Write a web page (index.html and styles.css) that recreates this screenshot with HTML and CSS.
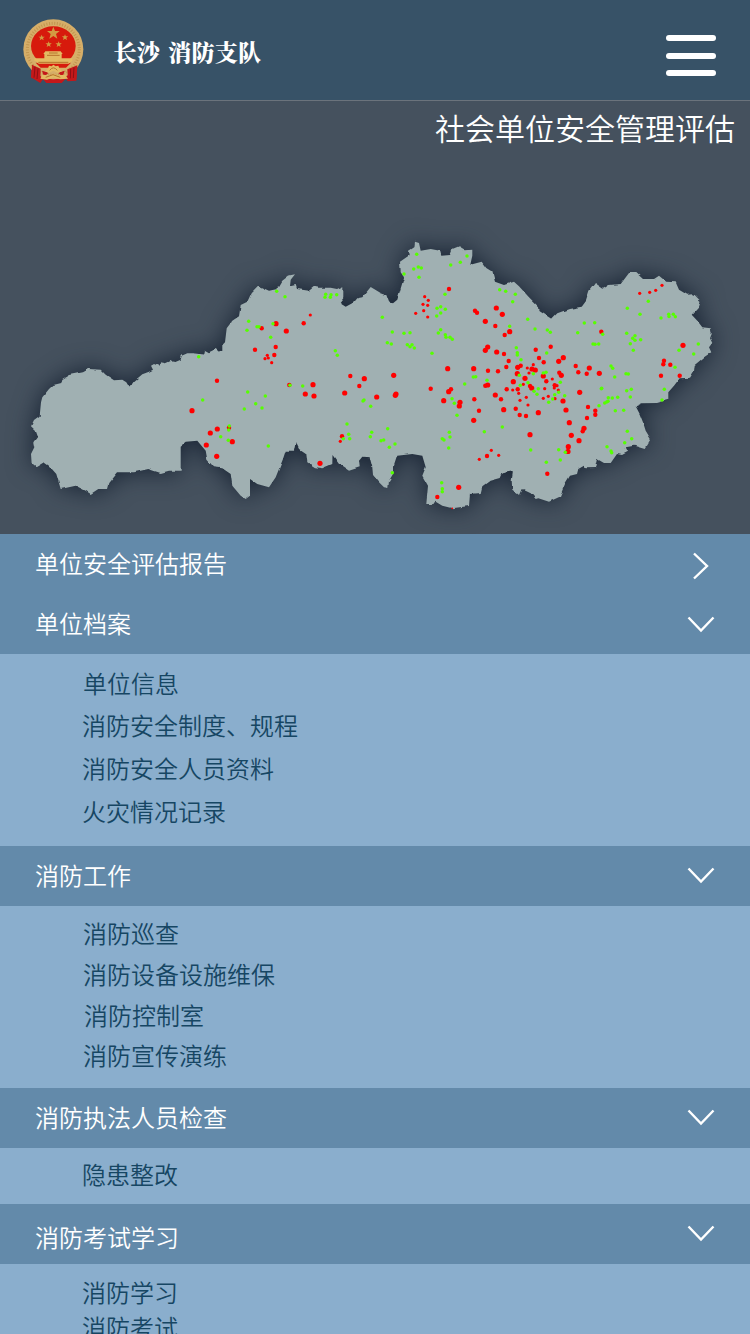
FILE: index.html
```html
<!DOCTYPE html>
<html lang="zh-CN">
<head>
<meta charset="utf-8">
<title>长沙 消防支队</title>
<link rel="stylesheet" href="styles.css">
</head>
<body>
<header class="topbar">
  <svg class="emblem" viewBox="0 0 186 204">
    <path class="drape" d="M27 128L24 178L52 195L60 184L70 195L116 195L128 182L134 190L160 188L163 146L150 130Z"/>
    <circle class="gold" cx="91" cy="94" r="90"/>
    <circle class="wheat" cx="91" cy="94" r="78"/>
    <ellipse class="red" cx="91" cy="84" rx="67" ry="59"/>
    <path class="red" d="M38 134H144L129 149H53Z"/>
    <g class="star">
      <path d="M91 26l5 13h14l-11 9 4 14-12-8-12 8 4-14-11-9h14z"/>
      <path d="M56 50l2.500 6h7l-5.500 4 2 7-6-4-6 4 2-7-5.500-4h7z"/>
      <path d="M126 49l2.500 6h7l-5.500 4 2 7-6-4-6 4 2-7-5.500-4h7zM77 70l2.500 6h7l-5.500 4 2 7-6-4-6 4 2-7-5.500-4h7zM107 70l2.500 6h7l-5.500 4 2 7-6-4-6 4 2-7-5.500-4h7z"/>
    </g>
    <g class="gate">
      <path d="M67 100H113L119 108H116V121H148V129H34V121H64V108H61Z"/>
      <path d="M37 129H148L137 137H47Z"/>
    </g>
    <path class="drape" d="M27 140l26 12-1 40-12-10-15-2zM163 142l-30 12 2 34 12-8 13 2zM57 158l20 6-14 12zM125 158l-20 6 14 12z"/>
    <path class="fold" d="M36 147l-3 32M45 151l-3 32M153 148l-2 32M143 153l-1 28"/>
    <path class="gate" d="M67 160l8-9 3-8 8 2 5-5 7 5 8-2 3 8 8 9-12 5-14-7-14 7zM58 170l22 2 12-5 12 5 23-2 8 12-24 2-19-6-20 7-20-3z"/>
    <path class="line" d="M80 157q11-15 23 0M68 178l22-8 22 8M72 112h38M78 105h26M46 133h90"/>
  </svg>
  <h1 class="brand">长沙 消防支队</h1>
  <div class="burger"><span></span><span></span><span></span></div>
</header>
<section class="overview">
  <h2 class="headline">社会单位安全管理评估</h2>
  <svg class="map" viewBox="0 101 750 433">
    <defs>
      <filter id="coast" x="-5%" y="-10%" width="110%" height="120%" color-interpolation-filters="sRGB">
        <feTurbulence type="fractalNoise" baseFrequency="0.14" numOctaves="1" seed="4" result="n"/>
        <feDisplacementMap in="SourceGraphic" in2="n" scale="3.500" xChannelSelector="R" yChannelSelector="G"/>
        <feOffset dx="-1" dy="-1"/>
      </filter>
      <marker id="rl" viewBox="-3 -3 6 6" markerWidth="6" markerHeight="6" markerUnits="userSpaceOnUse"><circle r="2.600" class="hot"/></marker>
      <marker id="rm" viewBox="-3 -3 6 6" markerWidth="6" markerHeight="6" markerUnits="userSpaceOnUse"><circle r="2.200" class="hot"/></marker>
      <marker id="rs" viewBox="-3 -3 6 6" markerWidth="6" markerHeight="6" markerUnits="userSpaceOnUse"><circle r="1.600" class="hot"/></marker>
      <marker id="gm" viewBox="-3 -3 6 6" markerWidth="6" markerHeight="6" markerUnits="userSpaceOnUse"><circle r="1.750" class="safe"/></marker>
    </defs>
    <g class="glow"><path class="land" filter="url(#coast)" d="M32 455L35.300 448.300 34.300 443.300 38.700 437.300 36.700 431.700 32 427.300 35 421 40.700 416.700 42 403.300 43.300 398.300 50 390 54.300 386 62.300 384 63.300 380 70 376 84 373.300 90 370 101.700 370.700 106.700 375.700 115 381.300 123.300 380.700 127.300 383.300 130.500 388.500 135 382.300 143.300 375.300 150 372.700 154 370.700 152 366.700 155 365 159.300 366.700 161.700 363.300 166.700 364.300 171.700 362 174 364 181.700 360.700 182.700 356.700 188.300 354.300 195 354.300 205 355.500 206 351 210 353.300 216.700 350 220 352.700 223.300 351.700 223.300 346 226 343.300 227.700 329.300 233.300 321.700 240 317.300 241.700 306 248.300 302.700 252.700 293.300 259 286.700 270 291.700 278.300 290 283.300 281.700 290 276.500 296 275.300 291.700 280.700 291 287.300 296.700 286 298 290 310 291.700 315 287.700 320 288.700 331.700 288.700 338 290 344.300 287.300 344.300 299.300 340.700 304 346.700 307.700 355 303.300 358.300 299.300 363.300 298.300 371.700 288 381.700 294 387.300 296 390 303.300 394 304.300 398.300 300.700 401 291.700 405 278.300 401.700 273.300 401 262.700 406.700 258.700 410.700 256 410 251.700 415.300 248.300 416 242.700 420 244 421.700 251.700 431.700 250 441 251.700 442.300 256.700 451 256 453.300 250 460 247.300 466.700 251.300 473.300 250.700 473.300 256.700 471.300 265.700 482.700 262.700 487.300 269 493.300 272.700 496 282.700 505 286 515 282.700 520 287.300 530 298.300 540 308.300 540.700 312.300 552.700 320 558.300 314.300 570 310 582.700 307.700 587 302 590.300 291.700 596 284 604.300 289.700 610 286 621.700 285 630 274 637.300 274 644 280 655 280 660 276.700 667.300 282.700 676.700 283.300 680 290.700 688.300 295.700 695 295.300 701.700 302.300 700 307.700 692.700 315.700 698.300 321.700 703.300 328.300 711.700 329.300 712.700 335 711 339.300 713.300 344 710 348.300 712.300 353.300 705 358.300 695.700 366 695 372.300 691 378.700 680.700 379.300 675 386.700 669.300 393.300 669.300 400.700 658 404 643.300 404.300 636.700 407.300 640.700 415 644 423.300 646.700 431.700 651.700 440 645.700 450 635 446.700 626.700 448.300 629 452.700 623 456 618 455 611.700 464 605 464 598 460 596 469 586.700 469.300 585 466.700 579.300 470 578 475 571 476.700 566 485 560.700 497.700 550 502.700 539.300 499.300 536.700 500 531.700 494.300 522.700 490 520 496 513.300 490.700 512.700 481.700 514 472.300 502.700 474.300 500.700 479 490.700 481.700 483.300 487.300 481.700 494 471 495 470 507 453.300 509.300 443.300 506.700 435 501.700 432.700 505 427.300 505 429 486.700 423.300 476.700 426.700 468.300 423.300 456.700 413.300 455 398.300 456.700 395 466.700 394 475 390 481.700 389.300 489 385 488.300 380 483.300 374 476 373.300 468.300 370.700 458.300 363.300 457.700 360 461.700 360.700 468.300 350 471.700 340 465 333.500 456 333.300 465 323.300 469.300 316 468.300 308.300 463.300 307.300 455 300 450 296.700 443.300 295 451.700 286.700 451.700 284 460 276.700 478.300 270 488.300 258.300 485 251 480 251 496.700 246.700 500 241.700 496.700 233.300 486.700 231.700 475 223.300 469.300 215 468.300 208.300 460.700 206.700 451.700 198.300 441.700 186.700 442.700 181.700 446.700 181.700 471.700 170 471.700 161.700 474 149.300 470 135 473.300 119 473.300 109.300 485 108 490 99.300 490 91.700 495 86.700 491.700 76.700 486.700 61.700 490 57.300 475 50 466.700 45 463.300 36.700 468.300 32.700 465Z"/></g>
    <polyline class="dots large" points="286.3,331 192,410.7 217.3,429 210.3,433 232.3,441.7 206.3,445 216.7,456.3 276,323.7 305.3,394 314,396 313,384.7 344.7,393 320,463.3 393.7,375.3 376.7,397 396,394 395.300,395.300 364.3,378.7 447.7,368.7 473.7,368.7 443.7,400.7 460,402.3 459.3,406 448.7,391.7 458.7,487.3 473.7,420.3 496.3,308 502.3,314.3 485.3,321.3 509.7,331.7 487.7,347 485.3,350.3 496.7,352 517.7,367.3 532,369 535.3,370 525,378.3 513.3,381.7 543.3,376 563.3,357.7 558.7,361.3 517.3,373.7 599.3,373.3 561.3,375.3 589.3,368 531.7,388 503.7,409.7 538.3,412.7 563,401 579.7,392.3 566,410 569.3,422.7 579,440.7 571.3,435.3 568.3,446.7 568,451.500 584,428.3 530,434.7 495.3,395 683,345.3 487.7,385"/>
    <polyline class="dots mid" points="229,427.7 261.7,328.3 303.7,323.3 275.7,347 255,349.7 274.3,355 217,380.7 289.3,385 350.3,376 342,436.3 359.3,386 449,289 475,310.7 477,312.7 451,389.3 474.3,399.3 479,410.7 430.7,388.7 437.3,497 495.3,326 504.7,335 504,354 535.7,349.7 550.7,346.7 539,358 543.7,362.3 508.7,361 488,370.7 498,371.3 506.3,367 520.7,365.7 546.3,381.3 559.3,372.7 575.7,366 578.3,372.3 586.7,373.7 601.3,331.7 530,386 517.7,389.3 506.7,389.3 485.3,385.7 554.7,385.3 501,399.3 515.7,408.7 519.7,415 526,416 582.7,431.3 587,418 588,407 595.3,410.7 595.3,414.7 487,456 547.3,473.7 664,360.7 663.3,364.3 670.3,364.7 661,375.7 679.7,375.7"/>
    <polyline class="dots small" points="310.3,315 267.3,355.3 265,358.7 268.3,358 271.7,362.7 340.3,441.3 424.7,296.7 428.3,300.3 423,304.3 427.7,305.3 423.7,310.7 427.7,317 415.7,313.3 533.3,364.7 527.3,368 529,373 552.3,379 523.3,384.3 544.7,388.7 557,385.7 554.300,388 512.7,390 518.7,393.3 520,400.3 526.3,397.3 528,405 543.3,398.3 548.3,396.3 555,398.7 558.3,390 491.3,450.3 498.7,455.3 479.3,459.3 639.7,293.3 649.7,292.3 655.7,290.3 662,285.3"/>
    <polyline class="dots green" points="276.7,291.3 285,296.7 248.7,321.3 257,326.7 259,326.7 247,330.3 273,323.7 270.7,337.3 325.7,294.3 325,297.3 331,294.7 330.3,297.3 336.7,294.7 335.3,350.7 337.3,355.3 198.7,356.7 202.7,400 290,385.3 302.7,386 247.7,392 265.3,396 255.7,403.7 262,408 244.3,409 229.3,426 228.7,430 220.7,436.7 228.3,440.3 268.3,446 416.7,254.3 413.7,269 418.3,267 421.3,268 404,274 419,277.3 450.7,265 460.3,262.3 467,256 445,294.3 437,308.3 440.7,306.7 445.3,309.3 440.7,313 436.7,316 440.7,329.7 438.3,333 445.3,334.7 446,337.3 450,337.3 452.3,339.3 432,353.3 382.3,317.3 392.3,332 404,333.3 410,332.7 387.3,342.7 391.3,344 407.3,344.7 412,344.7 410,346.7 414.3,348 364,400 363,401 370.7,406.3 347,424 348.7,434.3 349.7,438.7 343.3,438.7 387.7,428.7 371.7,432.3 370.3,436.7 381,440.7 383.7,440 389.3,447.3 395,444 392.3,472.7 452,398.7 454.3,403.3 457,415.3 449.3,432.3 450,437 442.3,438.7 444,440 448.7,448 441.7,482.7 442.3,488.7 442.3,491.7 473.3,377 475.7,376.7 464.7,384 499.7,289.7 505.7,291.3 515.3,294.3 512.7,301.7 527.7,319.3 509.7,326.3 535,329 547.3,330 550.3,332.3 577.7,332.7 584.3,323 594.7,322.7 602.7,334.3 593,344 595,344.300 598.7,344 516.3,347.7 517.3,352.7 517.3,355 521,359.7 546.7,353 487,380.3 519.3,375.3 533.3,373.7 543.3,373 546,372.3 560.3,382.3 528,382.7 520.3,385.3 538.3,388.7 601.3,388.7 534,391.3 537,394.3 548.7,402.3 552.7,399 554.7,394.7 558.7,392.3 564.7,395.7 502.3,427 484.3,431.7 530.7,450 558.7,449.7 565.3,452.3 560.3,460 546.3,462.3 648.3,301.3 627.3,308.3 640,314.3 661,318 668.7,314.3 669,316.500 673.3,314.3 675.3,316.7 626.7,333.3 635,335.7 632.7,338.3 635,340.3 640.7,339.7 630.3,343.7 633.3,350.3 698.3,344 693.7,354 679,350.3 675,367.3 664.3,389.3 662,400 611,366 612.7,368.3 614.7,377 626,373.7 628.3,374 601.7,388.3 626.7,390.7 631.3,389.3 630.3,397 608.3,397.7 612.3,398 617.7,397.3 608,401.3 604.7,403 606.700,402 599,405.7 615.3,410.7 623.7,410.3 627.3,431.3 631.7,438.7 624.7,442.7 607,446.7 611,451 611.7,452.7"/>
    <circle class="hot" cx="452.300" cy="508.300" r="0.900"/>
  </svg>
</section>
<nav class="menu">
  <div class="row"><span>单位安全评估报告</span><svg class="arrow next" viewBox="0 0 28 28"><path d="M7 1.500L20 14 7 26.500"/></svg></div>
  <div class="row"><span>单位档案</span><svg class="arrow" viewBox="0 0 28 28"><path d="M1.500 7.500L14 20.500 26.500 7.500"/></svg></div>
  <ul class="sub files"><li class="in1">单位信息</li><li>消防安全制度、规程</li><li>消防安全人员资料</li><li>火灾情况记录</li></ul>
  <div class="row work"><span>消防工作</span><svg class="arrow" viewBox="0 0 28 28"><path d="M1.500 7.500L14 20.500 26.500 7.500"/></svg></div>
  <ul class="sub duties"><li class="in1">消防巡查</li><li class="in1">消防设备设施维保</li><li class="in2">消防控制室</li><li class="in1">消防宣传演练</li></ul>
  <div class="row work"><span>消防执法人员检查</span><svg class="arrow" viewBox="0 0 28 28"><path d="M1.500 7.500L14 20.500 26.500 7.500"/></svg></div>
  <ul class="sub fixes"><li>隐患整改</li></ul>
  <div class="row exam"><span>消防考试学习</span><svg class="arrow" viewBox="0 0 28 28"><path d="M1.500 7.500L14 20.500 26.500 7.500"/></svg></div>
  <ul class="sub study"><li>消防学习</li><li>消防考试</li></ul>
</nav>
</body>
</html>
```
FILE: styles.css
```css
* { box-sizing: border-box; }
html, body { height: 1334px; overflow: hidden; }
body {
  margin: 0;
  background: #8aaecd;
  font-family: "Noto Sans CJK SC", sans-serif;
  font-weight: 350;
  color: #fff;
}
h1, h2, ul { margin: 0; padding: 0; font-weight: inherit; }
ul { list-style: none; }

.topbar {
  display: flex;
  height: 101px;
  padding: 18px 34px 0 23px;
  background: #375267;
  border-bottom: 1px solid #6b737c;
}
.emblem { width: 62px; height: 68px; flex: none; }
.gold { fill: #d6ae68; }
.star { fill: #d39a42; }
.gate { fill: #e3ba62; }
.wheat { fill: none; stroke: #a97830; stroke-width: 9; stroke-dasharray: 3 5; opacity: .45; }
.red { fill: #d71a0c; }
.drape { fill: #c4181a; }
.fold { fill: none; stroke: #8d1014; stroke-width: 3; }
.line { fill: none; stroke: #b5732c; stroke-width: 3; }
.brand {
  margin-left: 28.500px;
  padding-top: 17px;
  font-family: "Noto Serif CJK SC", "Noto Sans CJK SC", serif;
  font-size: 23px;
  font-weight: 900;
  line-height: 34px;
  letter-spacing: .2px;
  word-spacing: 2.500px;
}
.burger { display: flex; flex-direction: column; gap: 11.500px; margin: 17px 0 0 auto; }
.burger span { width: 50px; height: 6px; border-radius: 3px; background: #fff; }

.overview { display: grid; height: 433px; background: #45515e; }
.headline {
  grid-area: 1 / 1;
  z-index: 1;
  padding: 4px 15px 0 0;
  font-size: 30px;
  line-height: 44px;
  text-align: right;
}
.map { grid-area: 1 / 1; display: block; width: 750px; height: 433px; }
.land { fill: #a0b0b2; }
.glow { filter: drop-shadow(0 0 12px rgba(14, 26, 42, .85)); }
.hot { fill: #f00; }
.safe { fill: #56ff00; }
.dots { fill: none; stroke: none; }
.large { marker: url(#rl); }
.mid { marker: url(#rm); }
.small { marker: url(#rs); }
.green { marker: url(#gm); }

.row {
  display: flex;
  justify-content: space-between;
  align-items: center;
  height: 60px;
  padding: 0 35px;
  background: #638aaa;
  font-size: 24px;
  line-height: 36px;
}
.row span { padding-bottom: 2px; }
.arrow { width: 28px; height: 28px; fill: none; stroke: #fff; stroke-width: 2.400; }
.next { margin-top: 4px; }
.work span { padding: 0 0 2px; }
.work .arrow { margin-top: -2px; }
.exam span { padding: 6px 0 0; }
.exam .arrow { margin-top: -2px; }

.sub {
  padding-left: 82px;
  background: #8aaecd;
  color: #164663;
  font-size: 24px;
}
.in1 { padding-left: 1px; }
.in2 { padding-left: 2px; }
.files { height: 192px; padding-top: 7.600px; line-height: 42.800px; }
.duties { height: 182px; padding-top: 7px; line-height: 40.800px; }
.fixes { height: 56px; line-height: 52px; }
.study { height: 70px; padding-top: 10px; line-height: 35px; overflow: hidden; }
```
